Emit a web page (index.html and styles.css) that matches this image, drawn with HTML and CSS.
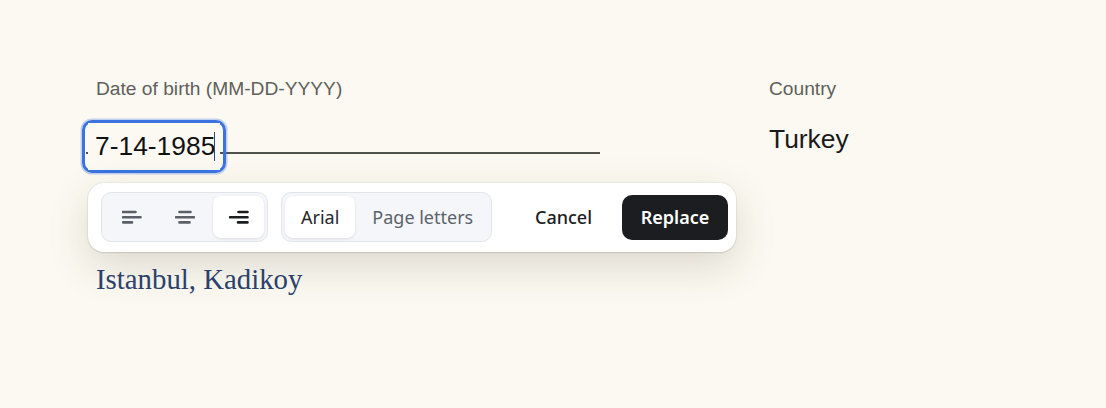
FILE: index.html
```html
<!DOCTYPE html>
<html lang="en">
<head>
<meta charset="utf-8">
<title>Date of birth</title>
<link rel="stylesheet" href="styles.css">
</head>
<body>
<main class="page">
  <section class="col-left">
    <div class="label">Date of birth (MM-DD-YYYY)</div>
    <div class="field">
      <div class="rule"></div>
      <div class="editor"><div class="editor-mask"><span class="editor-text">7-14-1985</span><span class="caret"></span></div></div>
      <div class="popover">
        <div class="seg seg-align">
          <button class="icon-btn"><svg width="20" height="14" viewBox="0 0 20 14"><path d="M1 2h12.5M1 7.2h17.5M1 12.4h9"/></svg></button>
          <button class="icon-btn mid"><svg width="20" height="14" viewBox="0 0 20 14"><path d="M4.5 2h11M1 7.2h18M4.5 12.4h10"/></svg></button>
          <button class="icon-btn on dark"><svg width="20" height="14" viewBox="0 0 20 14"><path d="M9.5 2h9M1 7.2h17.5M9 12.4h9.5"/></svg></button>
        </div>
        <div class="seg seg-font">
          <button class="txt-btn on">Arial</button>
          <button class="txt-btn">Page letters</button>
        </div>
        <button class="cancel">Cancel</button>
        <button class="replace">Replace</button>
      </div>
    </div>
    <div class="address">Istanbul, Kadikoy</div>
  </section>
  <section class="col-right">
    <div class="label">Country</div>
    <div class="value">Turkey</div>
  </section>
</main>
</body>
</html>
```
FILE: styles.css
```css
* { box-sizing: border-box; }
html, body { margin: 0; height: 100%; }
body { background: #fbf9f1; overflow: hidden; }
.page { display: flex; padding: 78px 0 0 96px; }
.col-left { width: 673px; }
.label { font: 19.2px/22px "Liberation Sans", Arial, sans-serif; color: #5f5f5b; }
.field { position: relative; width: 504px; height: 113px; margin-top: 31px; }
.rule { position: absolute; left: -10px; right: 0; top: 21px; height: 2px; background: #4f4f4c; }
.editor {
  position: absolute; z-index: 1; left: -14px; top: -11px; width: 144px; height: 53px;
  border: 3px solid #3b73e0; border-radius: 10px;
  box-shadow: 0 0 0 1.5px rgba(59,115,224,.3);
  padding: 0 3px;
}
.editor-mask {
  width: 132px; height: 100%; background: #fbf9f1;
  display: flex; align-items: center; padding-left: 7px; padding-bottom: 1px;
  font: 26.4px/30px "Liberation Sans", Arial, sans-serif; color: #111;
}
.caret { width: 1.5px; height: 29px; background: #2a4a80; margin-left: -1.5px; }
.popover {
  position: absolute; z-index: 2; left: -8px; top: 52px; width: 648px; height: 69px;
  background: #fff; border-radius: 16px;
  box-shadow: 0 0 0 1px rgba(0,0,0,.035), 0 1px 2px rgba(0,0,0,.1), 0 14px 40px rgba(70,60,40,.17);
  display: flex; align-items: center; padding: 0 8px 1px 13px;
  font-family: "Noto Sans", "Open Sans", sans-serif;
}
.seg {
  display: flex; height: 50px; padding: 3px; background: #f4f6f9;
  border: 1px solid #e1e5ea; border-radius: 10px;
}
.seg-align { width: 167px; }
.seg-font { width: 211px; margin-left: 13px; }
button { border: 0; background: none; padding: 0; font: inherit; }
.icon-btn { flex: 0 0 54px; display: flex; align-items: center; justify-content: center; border-radius: 8px; }
.icon-btn path { fill: none; stroke: #5a5f68; stroke-width: 2.6; stroke-linecap: round; }
.icon-btn.mid svg { margin-right: 3px; }
.icon-btn.dark { flex-basis: 51px; }
.icon-btn.dark svg { margin-left: 1px; }
.icon-btn.dark path { stroke: #1b1d21; }
.on { background: #fff; box-shadow: 0 1px 3px rgba(0,0,0,.1); }
.txt-btn { padding: 0 16px; font-size: 18px; color: #5c626b; border-radius: 8px; white-space: nowrap; }
.txt-btn + .txt-btn { padding-left: 17px; }
.txt-btn.on { color: #26282c; }
.cancel { margin-left: auto; padding: 0 30px 0 0; font-size: 18px; font-weight: 500; color: #1b1d21; }
.replace {
  width: 106px; height: 45px; background: #1b1d21; color: #fff; border-radius: 10px;
  font-size: 18px; font-weight: 600;
}
.address { margin-top: 18px; font: 28.8px/34px "Liberation Serif", "Times New Roman", serif; color: #2b4270; }
.value { margin-top: 23px; font: 26.4px/32px "Liberation Sans", Arial, sans-serif; color: #1a1a1a; }
```
